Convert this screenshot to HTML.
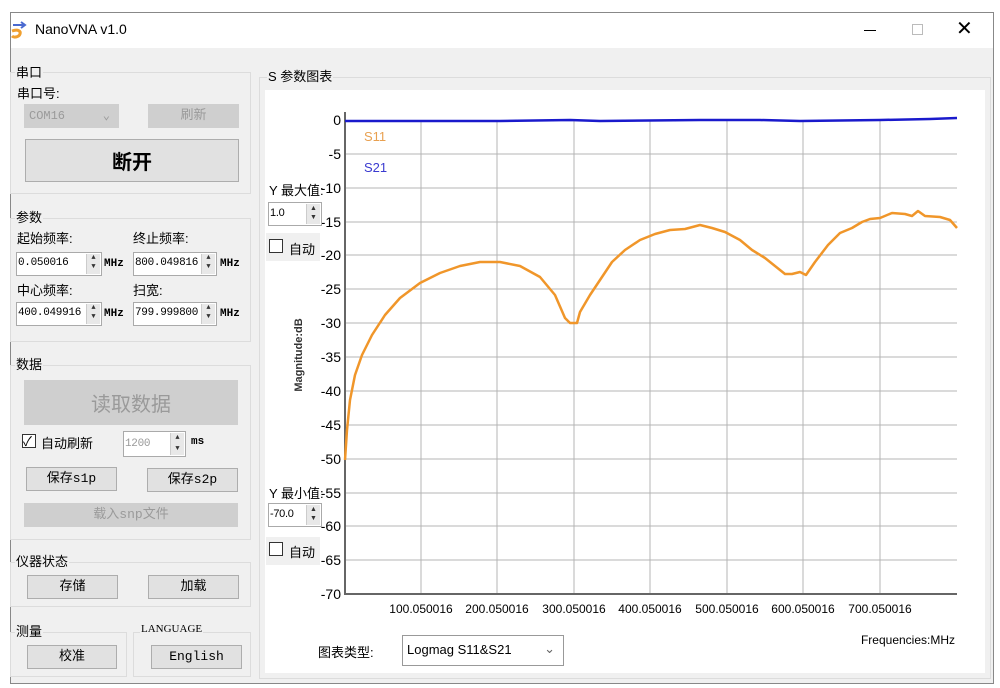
<!DOCTYPE html>
<html><head><meta charset="utf-8"><style>
*{box-sizing:border-box;margin:0;padding:0}
body{width:1000px;height:688px;background:#fff;position:relative;overflow:hidden;font-family:"Liberation Sans","Noto Sans CJK SC",sans-serif;font-size:13px;color:#000}
.a{position:absolute}
.win{left:10px;top:12px;width:984px;height:672px;border:1px solid #888;background:#f0f0f0}
.title{left:0;top:0;width:982px;height:35px;background:#fff}
.grp{position:absolute;border:1px solid #dcdcdc}
.lbl{position:absolute;background:#f0f0f0;padding:0 1px;font-size:13px}
.btn{position:absolute;background:#e1e1e1;border:1px solid #adadad;text-align:center;font-family:"Liberation Mono","Noto Sans CJK SC",monospace;font-size:13px}
.dis{background:#cfcfcf;border-color:#cfcfcf;color:#9a9a9a}
.inp{position:absolute;background:#fff;border:1px solid #aaa;font-family:"Liberation Mono",monospace;font-size:11px;padding-left:1px;line-height:20px;letter-spacing:-0.3px;overflow:hidden}
.spin{position:absolute;right:1px;top:1px;width:14px;bottom:1px;background:#e8e8e8;border-left:1px solid #ccc;font-size:7px;line-height:9px;text-align:center;color:#333;letter-spacing:0}
.mhz{position:absolute;font-family:"Liberation Mono",monospace;font-size:11px;font-weight:bold}
.cb{position:absolute;width:14px;height:14px;border:1px solid #333;background:#fff}
</style></head><body>
<div class="a win">
 <div class="a title"></div>
</div>
<svg class="a" style="left:10px;top:20px" width="20" height="20" viewBox="0 0 20 20"><path d="M3 5h12M11 2l4 3-4 3" stroke="#4a6ad0" stroke-width="2" fill="none"/><path d="M2 11c6-2 9 0 8 3-1 3-6 4-8 2" stroke="#f0a030" stroke-width="3" fill="none"/></svg>
<div class="a" style="left:35px;top:21px;font-size:14px">NanoVNA v1.0</div>
<div class="a" style="left:864px;top:30px;width:12px;height:1px;background:#000"></div>
<div class="a" style="left:912px;top:24px;width:11px;height:11px;border:1px solid #bbb"></div>
<div class="a" style="left:956px;top:16px;font-size:20px;font-weight:300">✕</div>

<div class="grp" style="left:10px;top:72px;width:241px;height:122px"></div>
<div class="lbl" style="left:15px;top:62px">串口</div>
<div class="a" style="left:17px;top:83px">串口号:</div>
<div class="btn dis" style="left:24px;top:104px;width:95px;height:24px;text-align:left;padding-left:4px;line-height:22px;font-size:12px">COM16<span style="position:absolute;right:8px">⌄</span></div>
<div class="btn dis" style="left:148px;top:104px;width:91px;height:24px;line-height:22px">刷新</div>
<div class="btn" style="left:25px;top:139px;width:214px;height:43px;line-height:42px;font-size:20px;font-weight:bold;font-family:'Noto Sans CJK SC',sans-serif">断开</div>

<div class="grp" style="left:10px;top:218px;width:241px;height:124px"></div>
<div class="lbl" style="left:15px;top:207px">参数</div>
<div class="a" style="left:17px;top:228px">起始频率:</div>
<div class="a" style="left:133px;top:228px">终止频率:</div>
<div class="inp" style="left:16px;top:252px;width:86px;height:24px">0.050016<div class="spin">▲<br>▼</div></div>
<div class="mhz" style="left:104px;top:258px">MHz</div>
<div class="inp" style="left:133px;top:252px;width:84px;height:24px">800.049816<div class="spin">▲<br>▼</div></div>
<div class="mhz" style="left:220px;top:258px">MHz</div>
<div class="a" style="left:17px;top:280px">中心频率:</div>
<div class="a" style="left:133px;top:280px">扫宽:</div>
<div class="inp" style="left:16px;top:302px;width:86px;height:24px">400.049916<div class="spin">▲<br>▼</div></div>
<div class="mhz" style="left:104px;top:308px">MHz</div>
<div class="inp" style="left:133px;top:302px;width:84px;height:24px">799.999800<div class="spin">▲<br>▼</div></div>
<div class="mhz" style="left:220px;top:308px">MHz</div>

<div class="grp" style="left:10px;top:365px;width:241px;height:175px"></div>
<div class="lbl" style="left:15px;top:354px">数据</div>
<div class="btn dis" style="left:24px;top:380px;width:214px;height:45px;line-height:44px;font-size:20px;font-family:'Noto Sans CJK SC',sans-serif">读取数据</div>
<div class="cb" style="left:22px;top:434px"></div>
<div class="a" style="left:23px;top:431px;font-size:13px">✓</div>
<div class="a" style="left:41px;top:433px">自动刷新</div>
<div class="inp" style="left:123px;top:431px;width:63px;height:26px;color:#999;line-height:24px">1200<div class="spin" style="line-height:11px">▲<br>▼</div></div>
<div class="a" style="left:191px;top:436px;font-family:'Liberation Mono',monospace;font-size:11px;font-weight:bold">ms</div>
<div class="btn" style="left:26px;top:467px;width:91px;height:24px;line-height:22px">保存s1p</div>
<div class="btn" style="left:147px;top:468px;width:91px;height:24px;line-height:22px">保存s2p</div>
<div class="btn dis" style="left:24px;top:503px;width:214px;height:24px;line-height:22px">载入snp文件</div>

<div class="grp" style="left:10px;top:562px;width:241px;height:45px"></div>
<div class="lbl" style="left:15px;top:551px">仪器状态</div>
<div class="btn" style="left:27px;top:575px;width:91px;height:24px;line-height:22px">存储</div>
<div class="btn" style="left:148px;top:575px;width:91px;height:24px;line-height:22px">加载</div>

<div class="grp" style="left:10px;top:632px;width:117px;height:45px"></div>
<div class="lbl" style="left:15px;top:621px">测量</div>
<div class="btn" style="left:27px;top:645px;width:90px;height:24px;line-height:22px">校准</div>
<div class="grp" style="left:133px;top:632px;width:118px;height:45px"></div>
<div class="lbl" style="left:140px;top:623px;font-family:'Liberation Serif',serif;font-size:11px">LANGUAGE</div>
<div class="btn" style="left:151px;top:645px;width:91px;height:24px;line-height:22px">English</div>

<div class="grp" style="left:259px;top:77px;width:732px;height:602px"></div>
<div class="lbl" style="left:267px;top:66px">S 参数图表</div>
<div class="a" style="left:265px;top:90px;width:720px;height:583px;background:#fff"></div>

<svg class="a" style="left:0;top:0" width="1000" height="688" font-family="Liberation Sans,sans-serif">
 <g stroke="#b4b4b4" stroke-width="1">
  <line x1="421" y1="120" x2="421" y2="594"/><line x1="497" y1="120" x2="497" y2="594"/><line x1="574" y1="120" x2="574" y2="594"/><line x1="650" y1="120" x2="650" y2="594"/><line x1="727" y1="120" x2="727" y2="594"/><line x1="803" y1="120" x2="803" y2="594"/><line x1="880" y1="120" x2="880" y2="594"/>
  <line x1="345" y1="154" x2="957" y2="154"/><line x1="345" y1="188" x2="957" y2="188"/><line x1="345" y1="222" x2="957" y2="222"/><line x1="345" y1="255" x2="957" y2="255"/><line x1="345" y1="289" x2="957" y2="289"/><line x1="345" y1="323" x2="957" y2="323"/><line x1="345" y1="357" x2="957" y2="357"/><line x1="345" y1="391" x2="957" y2="391"/><line x1="345" y1="425" x2="957" y2="425"/><line x1="345" y1="459" x2="957" y2="459"/><line x1="345" y1="493" x2="957" y2="493"/><line x1="345" y1="526" x2="957" y2="526"/><line x1="345" y1="560" x2="957" y2="560"/>
 </g>
 <line x1="345" y1="112" x2="345" y2="595" stroke="#666" stroke-width="2"/>
 <line x1="344" y1="594" x2="957" y2="594" stroke="#666" stroke-width="2"/>
 <g font-size="14" text-anchor="end" fill="#000">
  <text x="341" y="125">0</text><text x="341" y="159">-5</text><text x="341" y="193">-10</text><text x="341" y="227">-15</text><text x="341" y="260">-20</text><text x="341" y="294">-25</text><text x="341" y="328">-30</text><text x="341" y="362">-35</text><text x="341" y="396">-40</text><text x="341" y="430">-45</text><text x="341" y="464">-50</text><text x="341" y="498">-55</text><text x="341" y="531">-60</text><text x="341" y="565">-65</text><text x="341" y="599">-70</text>
 </g>
 <g font-size="12" text-anchor="middle">
  <text x="421" y="613">100.050016</text><text x="497" y="613">200.050016</text><text x="574" y="613">300.050016</text><text x="650" y="613">400.050016</text><text x="727" y="613">500.050016</text><text x="803" y="613">600.050016</text><text x="880" y="613">700.050016</text>
 </g>
 <text x="955" y="644" font-size="12" text-anchor="end">Frequencies:MHz</text>
 <text transform="translate(302,355) rotate(-90)" font-size="11" font-weight="bold" text-anchor="middle" fill="#333">Magnitude:dB</text>
 <text x="364" y="141" font-size="13" fill="#e8a050">S11</text>
 <text x="364" y="172" font-size="13" fill="#3a3ad0">S21</text>
 <polyline fill="none" stroke="#1a1acc" stroke-width="2.5" points="345,121 400,121 500,121 570,120 600,121 700,120 760,120 800,121 880,120 930,119 957,118"/>
 <polyline fill="none" stroke="#f0962a" stroke-width="2.5" stroke-linejoin="round" points="345,460 347,430 350,400 355,375 362,355 372,335 385,315 400,298 420,283 440,273 460,266 480,262 500,262 520,266 540,277 555,295 565,318 570,323 577,323 580,312 590,295 600,280 612,262 625,250 640,240 655,234 670,230 685,229 700,225 712,228 725,232 740,240 752,250 765,258 775,266 785,274 792,274 800,272 806,275 815,262 828,245 840,233 852,228 862,222 870,219 880,218 892,213 905,214 912,216 918,211 925,216 940,217 950,220 957,228"/>
</svg>

<div class="a" style="left:269px;top:180px">Y 最大值:</div>
<div class="inp" style="left:268px;top:202px;width:54px;height:24px;font-family:'Liberation Sans',sans-serif">1.0<div class="spin">▲<br>▼</div></div>
<div class="a" style="left:266px;top:233px;width:54px;height:28px;background:#f0f0f0"></div>
<div class="cb" style="left:269px;top:239px"></div>
<div class="a" style="left:289px;top:239px">自动</div>
<div class="a" style="left:269px;top:483px">Y 最小值:</div>
<div class="inp" style="left:268px;top:503px;width:54px;height:24px;font-family:'Liberation Sans',sans-serif">-70.0<div class="spin">▲<br>▼</div></div>
<div class="a" style="left:266px;top:537px;width:54px;height:28px;background:#f0f0f0"></div>
<div class="cb" style="left:269px;top:542px"></div>
<div class="a" style="left:289px;top:542px">自动</div>

<div class="a" style="left:318px;top:642px">图表类型:</div>
<div class="a" style="left:402px;top:635px;width:162px;height:31px;border:1px solid #999;background:#fff;padding:6px 0 0 4px;font-size:13px">Logmag S11&amp;S21<span style="position:absolute;right:8px;top:5px;color:#666">⌄</span></div>
</body></html>
